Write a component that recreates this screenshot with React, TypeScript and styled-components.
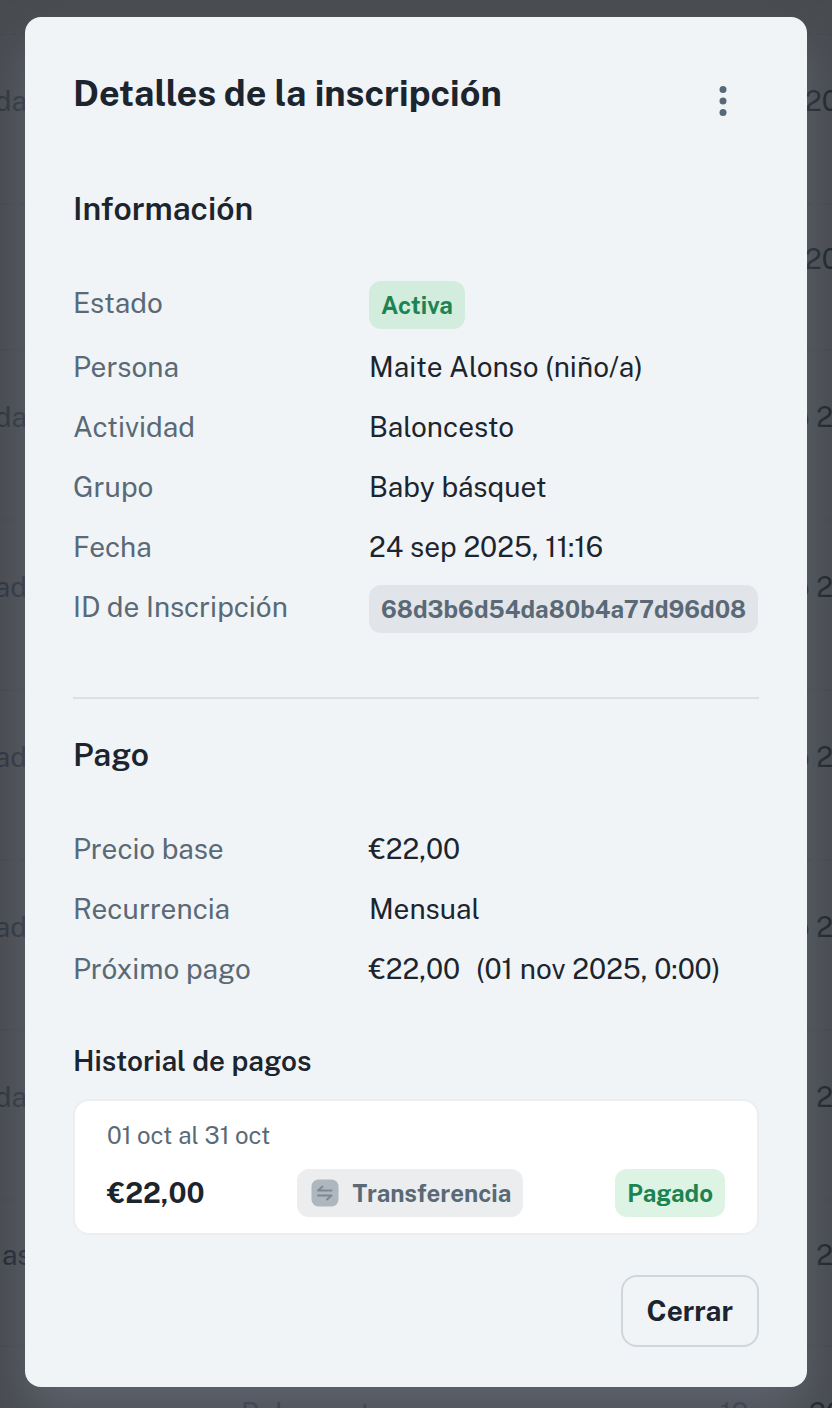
import React from "react";
import styled, { createGlobalStyle } from "styled-components";

const GlobalStyle = createGlobalStyle`
  * { box-sizing: border-box; }
  body {
    margin: 0;
    background: #484b4f;
    color: #1c252e;
    font-family: "Public Sans", Inter, "Liberation Sans", sans-serif;
    font-size: 28px;
    line-height: 44px;
  }
  h1, h2, h3, dl, dd, p { margin: 0; }
`;

const Page = styled.div`
  position: relative;
  overflow: hidden;
  min-height: 100vh;
  padding: 17px 25px 21px;
`;

const Backdrop = styled.div`
  position: absolute;
  inset: 0;
  overflow: hidden;
  padding-top: 33px;
  color: #2d333c;
`;

const BackRow = styled.div<{ $compact?: boolean }>`
  display: flex;
  height: ${(p) => (p.$compact ? 146 : 170)}px;
  padding-top: ${(p) => (p.$compact ? 32 : 44)}px;
  border-top: 2px dashed #45484d;
  white-space: pre;
`;

const BackName = styled.span<{ $dark?: boolean }>`
  display: flex;
  justify-content: ${(p) => (p.$dark ? "flex-start" : "flex-end")};
  width: 27px;
  padding-left: ${(p) => (p.$dark ? 2 : 0)}px;
  color: ${(p) => (p.$dark ? "#20252c" : "inherit")};
`;

const BackActivity = styled.span`
  flex: 1;
  padding-left: 214px;
`;

const BackDay = styled.span`
  width: 85px;
`;

const BackDate = styled.span<{ $end?: boolean; $inset?: boolean }>`
  display: flex;
  justify-content: ${(p) => (p.$end ? "flex-end" : "flex-start")};
  width: 27px;
  margin-right: ${(p) => (p.$end ? -1 : 0)}px;
  padding-left: ${(p) => (p.$inset ? 4 : 0)}px;
  color: #1f242b;
`;

const Dialog = styled.section`
  position: relative;
  padding: 48px 48px 40px;
  border-radius: 16px;
  background: #f0f4f7;
  box-shadow: 0 24px 48px rgba(120, 128, 148, 0.45);
`;

const Header = styled.header`
  display: flex;
  align-items: flex-start;
  justify-content: space-between;
  margin-bottom: 48px;
`;

const Title = styled.h1`
  font-size: 36px;
  line-height: 56px;
  font-weight: 700;
`;

const MenuButton = styled.button`
  display: grid;
  place-items: center;
  width: 72px;
  height: 72px;
  padding: 0;
  border: 0;
  border-radius: 50%;
  background: transparent;
  color: #596876;
`;

const SectionTitle = styled.h2`
  margin-bottom: 48px;
  font-size: 32px;
  line-height: 48px;
  font-weight: 600;
`;

const Details = styled.dl`
  display: grid;
  gap: 16px;
`;

const DetailRow = styled.div`
  display: grid;
  grid-template-columns: 296px 1fr;
  align-items: start;
`;

const Term = styled.dt`
  color: #5a6976;
`;

const Value = styled.dd`
  display: flex;
  gap: 16px;
  white-space: nowrap;
`;

const tones = {
  success: ["#d2eddd", "#1d8351"],
  paid: ["#ddf3e4", "#1d8351"],
  neutral: ["#e1e4e8", "#5a6976"],
  method: ["#ecedef", "#5a6976"],
};

const Badge = styled.span<{ $tone: keyof typeof tones }>`
  display: inline-flex;
  align-items: center;
  gap: 14px;
  height: 48px;
  padding: 0 12px;
  border-radius: 12px;
  background: ${(p) => tones[p.$tone][0]};
  color: ${(p) => tones[p.$tone][1]};
  font-size: 24px;
  font-weight: 700;
`;

const Divider = styled.hr`
  height: 2px;
  margin: 64px 0 32px;
  border: 0;
  background: #dbe0e5;
`;

const HistoryTitle = styled.h3`
  margin: 48px 0 16px;
  font-size: 28px;
  line-height: 44px;
  font-weight: 600;
`;

const PaymentCard = styled.article`
  padding: 16px 32px;
  border: 2px solid #eceef0;
  border-radius: 16px;
  background: #fff;
`;

const Period = styled.p`
  margin-bottom: 16px;
  color: #5a6976;
  font-size: 24px;
  line-height: 36px;
`;

const PaymentRow = styled.div`
  display: flex;
  align-items: center;
  justify-content: space-between;
`;

const Amount = styled.strong`
  font-weight: 700;
`;

const Footer = styled.footer`
  display: flex;
  justify-content: flex-end;
  margin-top: 40px;
`;

const CloseButton = styled.button`
  height: 72px;
  padding: 0 24px;
  border: 2px solid #cfd6dc;
  border-radius: 16px;
  background: transparent;
  color: #1c252e;
  font: inherit;
  font-weight: 700;
`;

const TransferIcon = () => (
  <svg width="30" height="28" viewBox="0 0 30 28" fill="none" aria-hidden="true">
    <rect x="2.5" y="0.5" width="27" height="27" rx="7" fill="#afb7be" />
    <path
      d="M22.5 11.5H9L13.5 7.5M9 16.5H22.5L18 20.5"
      stroke="#7c8893"
      strokeWidth="2"
      strokeLinecap="round"
      strokeLinejoin="round"
    />
  </svg>
);

const backRows = [
  { name: "da", date: "20" },
  { name: "", date: "20", compact: true },
  { name: "da", date: "o 2" },
  { name: "ad", date: "o 2" },
  { name: "ad", date: "o 2" },
  { name: "ad", date: "o 2" },
  { name: "da", date: "2" },
  { name: "as", date: "2", compact: true, dark: true },
  { name: "", activity: "Baloncesto", day: "12", date: "20", inset: true },
];

const info: [string, React.ReactNode][] = [
  ["Estado", <Badge $tone="success">Activa</Badge>],
  ["Persona", "Maite Alonso (niño/a)"],
  ["Actividad", "Baloncesto"],
  ["Grupo", "Baby básquet"],
  ["Fecha", "24 sep 2025, 11:16"],
  ["ID de Inscripción", <Badge $tone="neutral">68d3b6d54da80b4a77d96d08</Badge>],
];

const payment: [string, React.ReactNode][] = [
  ["Precio base", "€22,00"],
  ["Recurrencia", "Mensual"],
  ["Próximo pago", <><span>€22,00</span><span>(01 nov 2025, 0:00)</span></>],
];

const DetailList = ({ rows }: { rows: [string, React.ReactNode][] }) => (
  <Details>
    {rows.map(([term, value]) => (
      <DetailRow key={term}>
        <Term>{term}</Term>
        <Value>{value}</Value>
      </DetailRow>
    ))}
  </Details>
);

export default function App() {
  return (
    <>
      <GlobalStyle />
      <Page>
        <Backdrop aria-hidden="true">
          {backRows.map((row, i) => (
            <BackRow key={i} $compact={row.compact}>
              <BackName $dark={row.dark}>{row.name}</BackName>
              <BackActivity>{row.activity}</BackActivity>
              <BackDay>{row.day}</BackDay>
              <BackDate $end={row.date !== "20"} $inset={row.inset}>{row.date}</BackDate>
            </BackRow>
          ))}
        </Backdrop>
        <Dialog role="dialog" aria-labelledby="dialog-title">
          <Header>
            <Title id="dialog-title">Detalles de la inscripción</Title>
            <MenuButton type="button" aria-label="Más opciones">
              <svg width="40" height="40" viewBox="0 0 40 40" fill="currentColor" aria-hidden="true">
                <circle cx="20" cy="8.5" r="3.5" />
                <circle cx="20" cy="20" r="3.5" />
                <circle cx="20" cy="31.5" r="3.5" />
              </svg>
            </MenuButton>
          </Header>
          <SectionTitle>Información</SectionTitle>
          <DetailList rows={info} />
          <Divider />
          <SectionTitle>Pago</SectionTitle>
          <DetailList rows={payment} />
          <HistoryTitle>Historial de pagos</HistoryTitle>
          <PaymentCard>
            <Period>01 oct al 31 oct</Period>
            <PaymentRow>
              <Amount>€22,00</Amount>
              <Badge $tone="method">
                <TransferIcon />
                Transferencia
              </Badge>
              <Badge $tone="paid">Pagado</Badge>
            </PaymentRow>
          </PaymentCard>
          <Footer>
            <CloseButton type="button">Cerrar</CloseButton>
          </Footer>
        </Dialog>
      </Page>
    </>
  );
}
